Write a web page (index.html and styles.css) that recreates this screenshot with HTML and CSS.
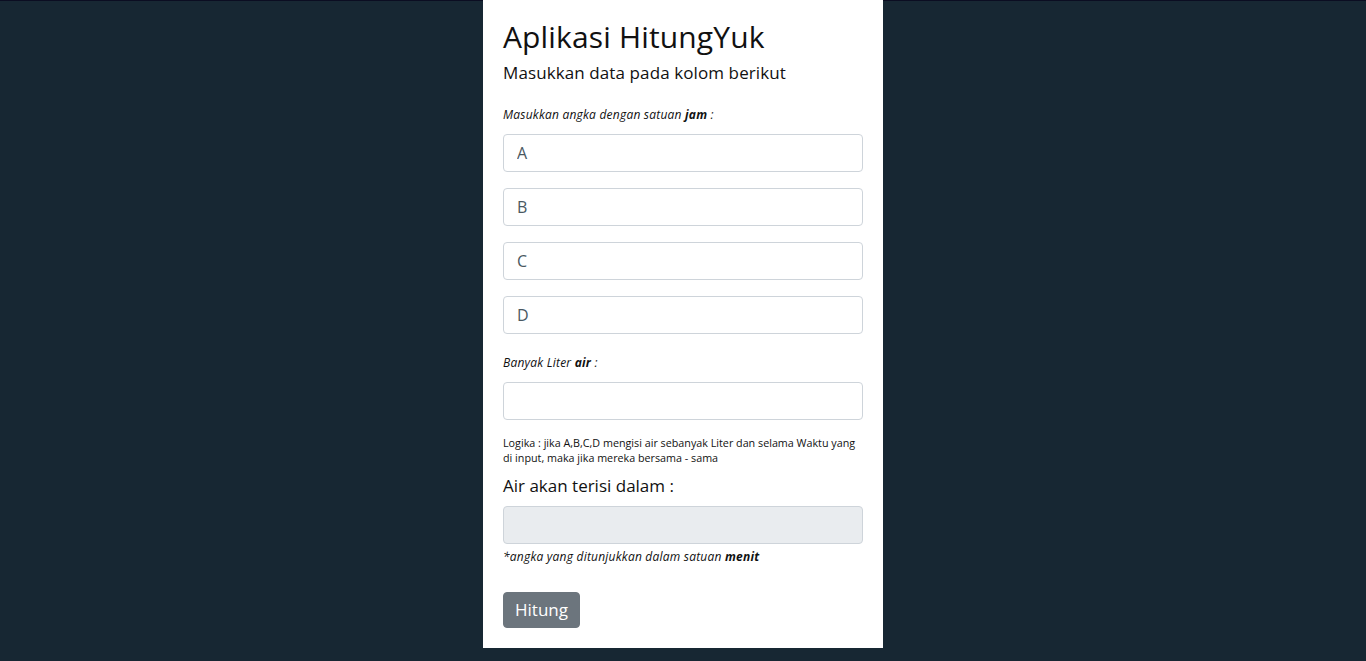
FILE: index.html
```html
<!DOCTYPE html>
<html lang="id">
<head>
<meta charset="utf-8">
<title>Aplikasi HitungYuk</title>
<link rel="stylesheet" href="styles.css">
</head>
<body>
<main class="card">
  <h1 class="title">Aplikasi HitungYuk</h1>
  <p class="subtitle">Masukkan data pada kolom berikut</p>
  <p class="label">Masukkan angka dengan satuan <b>jam</b> :</p>
  <div class="inputs">
    <input class="field" type="text" placeholder="A">
    <input class="field" type="text" placeholder="B">
    <input class="field" type="text" placeholder="C">
    <input class="field" type="text" placeholder="D">
  </div>
  <p class="label label-air">Banyak Liter <b>air</b> :</p>
  <input class="field" type="text">
  <p class="logic">Logika : jika A,B,C,D mengisi air sebanyak Liter dan selama Waktu yang di input, maka jika mereka bersama - sama</p>
  <h2 class="result-title">Air akan terisi dalam :</h2>
  <input class="field field-readonly" type="text" readonly>
  <p class="note">*angka yang ditunjukkan dalam satuan <b>menit</b></p>
  <button class="btn" type="button">Hitung</button>
</main>
</body>
</html>
```

FILE: styles.css
```css
html, body {
  margin: 0;
  padding: 0;
}
body {
  background: linear-gradient(#0b0d22, #0b0d22) top / 100% 1px no-repeat, #172733;
  min-height: 661px;
  font-family: "Open Sans", "Noto Sans", sans-serif;
  color: #212529;
}
.card {
  width: 400px;
  box-sizing: border-box;
  margin: 0 auto;
  background: #fff;
  padding: 19px 20px 20px;
  display: flex;
  flex-direction: column;
  align-items: stretch;
}
.title {
  margin: 0;
  font-size: 30px;
  font-weight: 400;
  letter-spacing: 0.15px;
  line-height: 36px;
  color: #111;
}
.subtitle {
  margin: 6px 0 0;
  font-size: 17px;
  letter-spacing: 0.1px;
  line-height: 24px;
  color: #111;
}
.label {
  margin: 22px 0 0;
  font-size: 12px;
  font-style: italic;
  letter-spacing: 0.22px;
  line-height: 16px;
  color: #111;
}
.label b {
  font-weight: 700;
}
.inputs {
  margin-top: 11px;
  display: flex;
  flex-direction: column;
  gap: 16px;
}
.field {
  box-sizing: border-box;
  width: 100%;
  height: 38px;
  border: 1px solid #ced4da;
  border-radius: 4px;
  padding: 0 13px;
  font-family: inherit;
  font-size: 16px;
  color: #495057;
  background: #fff;
  outline: none;
}
.field::placeholder {
  color: #4a5862;
  opacity: 1;
}
.label-air {
  margin-top: 21px;
  margin-bottom: 11px;
}
.logic {
  margin: 16px 0 0;
  font-size: 10.75px;
  line-height: 15px;
  color: #111;
}
.result-title {
  margin: 8px 0 0;
  font-size: 17px;
  font-weight: 400;
  line-height: 24px;
  color: #111;
}
.field-readonly {
  margin-top: 8px;
  background: #e9ecef;
}
.note {
  margin: 5px 0 0;
  font-size: 12px;
  font-style: italic;
  letter-spacing: 0.22px;
  line-height: 16px;
  color: #111;
}
.btn {
  align-self: flex-start;
  margin-top: 27px;
  height: 36px;
  padding: 0 11px;
  border: 1px solid #6c757d;
  border-radius: 4px;
  background: #6c757d;
  color: #fff;
  font-family: inherit;
  font-size: 17px;
  line-height: 24px;
  cursor: pointer;
}
```
